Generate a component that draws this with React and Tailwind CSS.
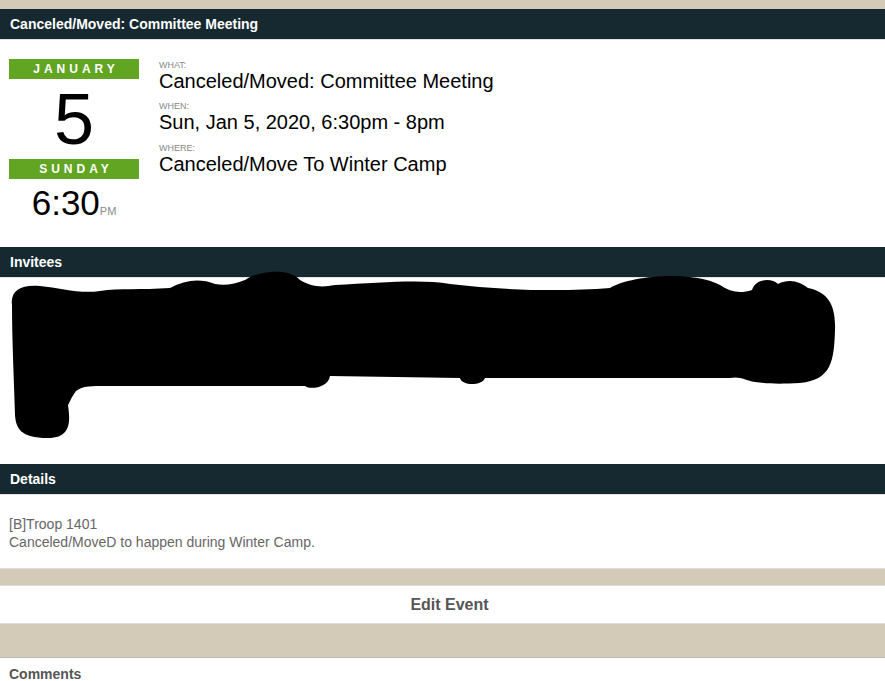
import React from "react";

const font = { fontFamily: '"Liberation Sans", Arial, sans-serif' };

function Bar({ children }) {
  return (
    <div className="h-[31px] bg-[#172930] border-b border-[#e3e3e3] flex items-center px-[10px] text-white font-bold text-[14px]">
      {children}
    </div>
  );
}

export default function App() {
  return (
    <div className="w-[885px] bg-white" style={font}>
      <div className="h-[9px] bg-[#d3cab8]" />
      <Bar>Canceled/Moved: Committee Meeting</Bar>
      <div className="h-[207px] flex pt-[19px] pl-[9px]">
        <div className="w-[130px] flex flex-col items-center">
          <div className="w-full h-[20px] bg-[#62a523] text-white font-bold text-[12px] tracking-[4px] flex items-center justify-center pl-[4px]">
            JANUARY
          </div>
          <div className="h-[80px] flex items-center justify-center text-[72px] leading-none text-black">5</div>
          <div className="w-full h-[20px] bg-[#62a523] text-white font-bold text-[12px] tracking-[4px] flex items-center justify-center pl-[4px]">
            SUNDAY
          </div>
          <div className="flex items-baseline mt-[6px] leading-none">
            <span className="text-[35px] text-black">6:30</span>
            <span className="text-[11px] text-[#8a8a8a]">PM</span>
          </div>
        </div>
        <div className="ml-[20px] flex flex-col">
          <div className="text-[9px] text-[#888] leading-[10px] mt-[1px]">WHAT:</div>
          <div className="text-[20px] text-black leading-[22px]">Canceled/Moved: Committee Meeting</div>
          <div className="text-[9px] text-[#888] leading-[10px] mt-[9px]">WHEN:</div>
          <div className="text-[20px] text-black leading-[22px]">Sun, Jan 5, 2020, 6:30pm - 8pm</div>
          <div className="text-[9px] text-[#888] leading-[10px] mt-[10px]">WHERE:</div>
          <div className="text-[20px] text-black leading-[22px]">Canceled/Move To Winter Camp</div>
        </div>
      </div>
      <Bar>Invitees</Bar>
      <div className="relative h-[186px]">
        <svg
          className="absolute left-0 top-[-8px]"
          width="885"
          height="180"
          viewBox="0 270 885 180"
        >
          <path
            fill="#000"
            d="M 12 305 C 10 290, 22 284, 40 286 C 60 288, 80 294, 100 291 C 120 288, 140 290, 170 288 C 185 280, 200 278, 215 284 C 225 286, 235 284, 245 280 C 260 270, 290 268, 300 280 C 310 286, 320 288, 335 285 C 380 283, 420 279, 450 284 C 500 290, 560 292, 610 288 C 630 276, 690 270, 720 285 C 730 292, 740 294, 752 290 C 756 278, 772 278, 778 284 C 790 278, 800 282, 808 288 C 828 292, 836 305, 835 330 C 834 360, 832 380, 800 383 C 780 384, 770 384, 755 382 C 745 380, 740 376, 730 378 L 485 378 C 482 386, 462 386, 460 378 L 330 376 C 328 388, 310 390, 305 386 L 100 386 C 90 386, 78 386, 74 394 C 70 400, 70 402, 68 405 C 70 420, 72 438, 48 438 C 20 438, 16 428, 15 415 C 14 380, 12 340, 12 305 Z"
          />
        </svg>
      </div>
      <Bar>Details</Bar>
      <div className="h-[73px] pt-[20px] px-[9px] text-[14px] leading-[18px] text-[#666]">
        <div>[B]Troop 1401</div>
        <div>Canceled/MoveD to happen during Winter Camp.</div>
      </div>
      <div className="h-[18px] bg-[#d3cab8] border-y border-[#dcdcdc]" />
      <div className="h-[37px] flex items-center justify-center pl-[14px] text-[16px] font-bold text-[#555]">
        Edit Event
      </div>
      <div className="h-[35px] bg-[#d3cab8] border-t border-[#dcdcdc] border-b border-b-[#bdbdbd]" />
      <div className="h-[24px] pt-[8px] px-[9px] text-[14px] font-bold text-[#555] leading-[17px]">
        Comments
      </div>
    </div>
  );
}
